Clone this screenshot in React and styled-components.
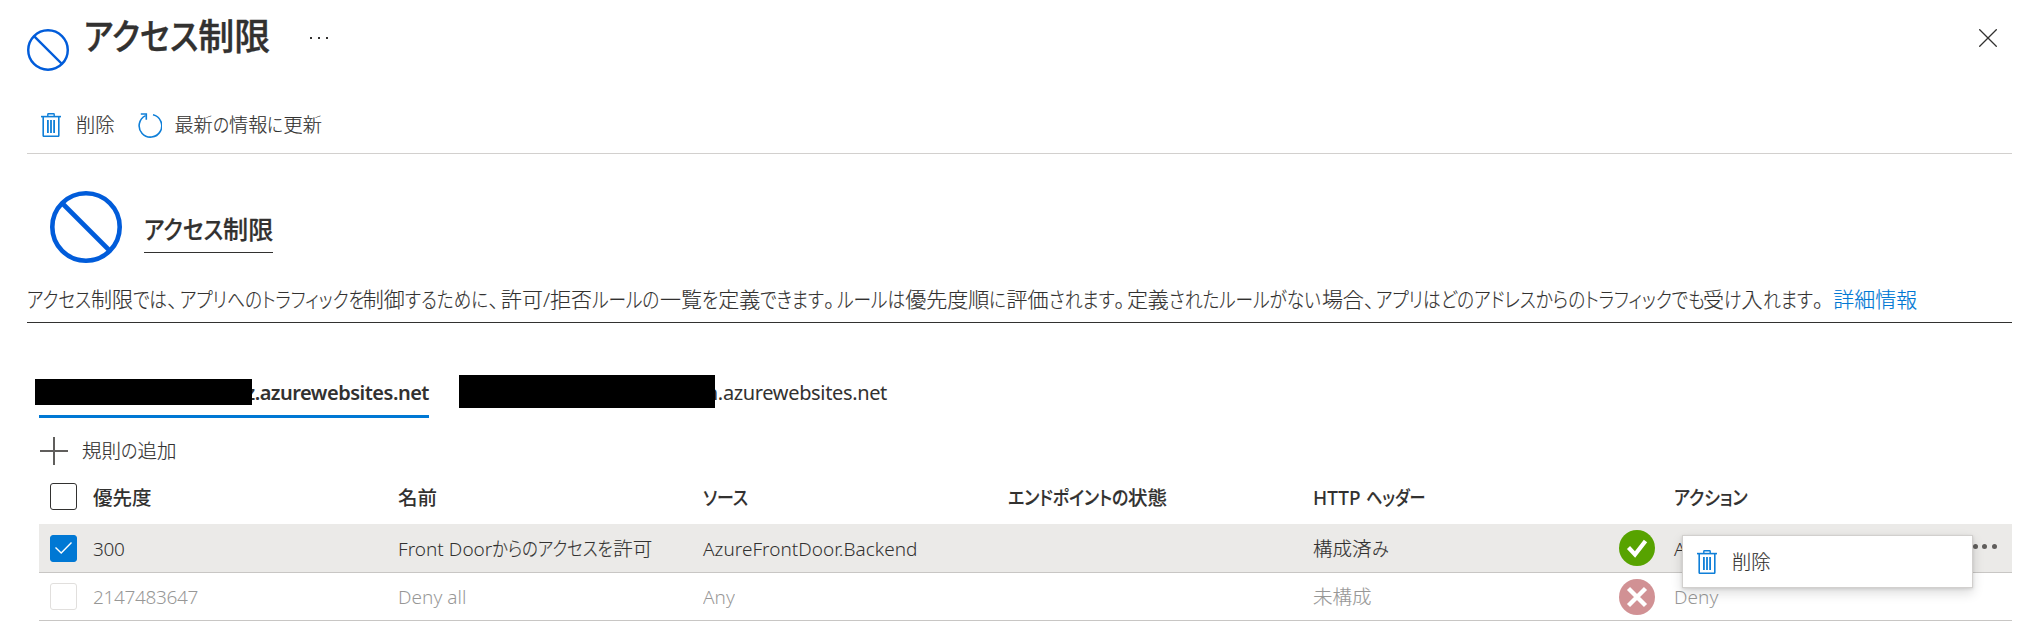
import React from "react";
import styled, { createGlobalStyle } from "styled-components";

const GlobalStyle = createGlobalStyle`
  * { box-sizing: border-box; }
  body {
    --latin-weight: 350;
    margin: 0;
    background: #fff;
    color: #323130;
    font-family: "Noto Sans", "Noto Sans CJK JP", sans-serif;
    font-size: 19.5px;
    font-weight: 300;
    overflow: hidden;
  }
`;

/* Text helper: kana are condensed relative to kanji, Latin slightly smaller. */
const Phrase = styled.span`
  white-space: nowrap;
  font-feature-settings: "palt";
  -webkit-text-stroke: ${(p) => p.$stroke}px currentColor;
`;
const Kana = styled.span`
  display: inline-block;
  transform: scaleX(${(p) => 1 - p.$tight * 1.09});
  transform-origin: left center;
  margin-right: ${(p) => -p.$tight * p.$count}em;
`;
const Punctuation = styled.span`
  letter-spacing: 0.1em;
`;
const Latin = styled.span`
  font-size: 0.974em;
  font-weight: var(--latin-weight);
  letter-spacing: ${(p) => (p.$digits ? -0.018 : 0.002)}em;
  -webkit-text-stroke: 0;
`;

const RUNS = /[\u3001\u3002]+|[\u3041-\u30ff]+|[\x20-\x7e]+|[^\x20-\x7e\u3001-\u30ff]+/g;

function Text({ children, tight = 0.12, stroke = 0.15 }) {
  return (
    <Phrase $stroke={stroke}>
      {children.match(RUNS).map((run, i) => {
        if (/^[\u3001\u3002]/.test(run)) return <Punctuation key={i}>{run}</Punctuation>;
        if (/^[\u3041-\u30ff]/.test(run)) return <Kana key={i} $tight={tight} $count={run.length}>{run}</Kana>;
        if (/^[\x20-\x7e]/.test(run)) return <Latin key={i} $digits={/^\d/.test(run)}>{run}</Latin>;
        return run;
      })}
    </Phrase>
  );
}

const Page = styled.main`
  width: 2027px;
  height: 638px;
  padding: 0 15px 0 27px;
`;

const Header = styled.header`
  display: flex;
  align-items: flex-start;
  height: 91px;
  padding-right: 15px;
`;
const HeaderIcon = styled.div`
  height: 42px;
  margin-top: 29px;
`;
const Title = styled.h1`
  margin: 12px 0 0 15px;
  width: 189px;
  font-size: 36px;
  font-weight: 500;
  line-height: 50px;
`;
const MoreDots = styled.div`
  display: flex;
  gap: 6px;
  margin: 37px 0 0 37px;
  i { width: 2px; height: 2px; background: #323130; }
`;
const CloseButton = styled.button`
  margin: 29px 0 0 auto;
  padding: 0;
  border: 0;
  background: none;
  height: 18px;
`;

const Toolbar = styled.div`
  display: flex;
  align-items: center;
  height: 63px;
  padding: 11px 0 5px 14px;
  border-bottom: 1px solid #d2d0ce;
  font-size: 19.2px;
`;
const Command = styled.div`
  display: flex;
  align-items: center;
  gap: ${(p) => p.$gap || 15}px;
  margin-right: 24px;
  line-height: 28px;
  svg { display: block; }
`;

const Hero = styled.section`
  display: flex;
  height: 124px;
  padding: 37px 0 0 23px;
`;
const HeroTitle = styled.h2`
  margin: 19px 0 0 22px;
  width: 129px;
  height: 43px;
  border-bottom: 1px solid #323130;
  font-size: 25.1px;
  font-weight: 500;
  line-height: 39px;
`;

const Description = styled.p`
  display: flex;
  gap: 8px;
  margin: 0;
  height: 45px;
  border-bottom: 1px solid #323130;
  font-size: 21px;
  line-height: 43px;
`;
const Link = styled.a`
  color: #0078d4;
`;

const Tabs = styled.nav`
  display: flex;
  gap: 30px;
  height: 95px;
  padding: 53px 0 0 12px;
`;
const Tab = styled.div`
  position: relative;
  width: ${(p) => p.$width}px;
  height: 42px;
  border-bottom: 3px solid ${(p) => (p.$active ? "#0078d4" : "transparent")};
  font-size: 20px;
  font-weight: ${(p) => (p.$active ? 600 : 400)};
  letter-spacing: ${(p) => (p.$active ? -0.5 : -0.35)}px;
  line-height: 34px;
  text-align: right;
`;
const Redaction = styled.span`
  position: absolute;
  left: ${(p) => p.$left}px;
  top: ${(p) => p.$top}px;
  width: ${(p) => p.$width}px;
  height: ${(p) => p.$height}px;
  background: #000;
`;

const AddRule = styled.div`
  display: flex;
  align-items: center;
  gap: 14px;
  height: 48px;
  padding: 0 0 0 13px;
  margin-top: 9px;
  line-height: 28px;
  svg { display: block; }
`;

const Table = styled.div`
  margin-left: 12px;
`;
const Row = styled.div`
  position: relative;
  display: grid;
  grid-template-columns: 54px 305px 305px 305px 305px 306px 55px 1fr 60px;
  align-items: center;
  line-height: 28px;
`;
const HeadRow = styled(Row)`
  --latin-weight: 550;
  height: 49px;
  font-weight: 500;
  padding-bottom: 6px;
`;
const BodyRow = styled(Row)`
  height: ${(p) => p.$height}px;
  border-bottom: 1px solid #c8c6c4;
  background: ${(p) => (p.$selected ? "#ebeae8" : "transparent")};
`;
const Cell = styled.div`
  opacity: ${(p) => (p.$muted ? 0.5 : 1)};
  padding-top: ${(p) => (p.$head ? 3 : 1)}px;
`;
const CheckBox = styled.div`
  display: flex;
  align-items: center;
  justify-content: center;
  width: 27px;
  height: 27px;
  margin-left: 11px;
  border: 1px solid ${(p) => (p.$checked ? "#0078d4" : p.$muted ? "#e1dfdd" : "#323130")};
  border-radius: 3px;
  background: ${(p) => (p.$checked ? "#0078d4" : "#fff")};
`;
const StatusIcon = styled.div`
  height: 36px;
  opacity: ${(p) => (p.$muted ? 0.5 : 1)};
  svg { display: block; }
`;
const RowMenuButton = styled.div`
  display: flex;
  justify-content: flex-end;
  gap: 4.6px;
  padding: 0 15px 4px 0;
  i { width: 5px; height: 5px; border-radius: 50%; background: #605e5c; }
`;
const ContextMenu = styled.div`
  position: absolute;
  z-index: 2;
  left: 1643px;
  top: 11px;
  display: flex;
  align-items: center;
  gap: 15px;
  width: 291px;
  height: 53px;
  padding-left: 14px;
  border: 1px solid #d2d0ce;
  background: #fff;
  font-size: 19.2px;
  box-shadow: 0 5px 11px rgba(0, 0, 0, 0.14), 0 1px 3px rgba(0, 0, 0, 0.12);
  svg { display: block; }
`;

const BlockedIcon = ({ size, stroke }) => (
  <svg width={size} height={size} viewBox="0 0 72 72" fill="none" stroke="#015cda">
    <circle cx="36" cy="36" r={36 - stroke / 2} strokeWidth={stroke} />
    <path d="M12.5 12.5 60 60" strokeWidth={stroke} />
  </svg>
);
const TrashIcon = () => (
  <svg width="20" height="24" viewBox="0 0 20 24" fill="none" stroke="#0f7fd8">
    <path d="M0 3.6h20" strokeWidth="1.6" />
    <path d="M6.8 3V1.2q0-.5.6-.5h5.2q.6 0 .6.5V3" strokeWidth="1.4" />
    <path d="M2.2 3.5v19q0 .8.8.8h14q.8 0 .8-.8v-19" strokeWidth="1.6" />
    <path d="M6.9 7v13M10 7v13M13.1 7v13" strokeWidth="1.8" />
  </svg>
);
const RefreshIcon = () => (
  <svg width="24" height="25" viewBox="0 0 24 25" fill="none" stroke="#0f7fd8" strokeWidth="1.6">
    <path d="M15 1.8A11.3 11.3 0 1 1 7.6 2.6" />
    <path d="M2.8 1h5.5v5.8" />
  </svg>
);
const CheckCircle = () => (
  <svg width="36" height="36" viewBox="0 0 36 36">
    <circle cx="18" cy="18" r="18" fill="#57a300" />
    <path d="M9.5 17.5l6.5 7L26.5 11" fill="none" stroke="#fff" strokeWidth="4.2" />
  </svg>
);
const CrossCircle = () => (
  <svg width="36" height="36" viewBox="0 0 36 36">
    <circle cx="18" cy="18" r="18" fill="#a4262c" />
    <path d="M9.5 9.5l17 17M26.5 9.5l-17 17" fill="none" stroke="#fff" strokeWidth="4.4" />
  </svg>
);

export default function App() {
  return (
    <>
      <GlobalStyle />
      <Page>
        <Header>
          <HeaderIcon><BlockedIcon size={42} stroke={4.2} /></HeaderIcon>
          <Title><Text stroke={0.4} tight={0.115}>アクセス制限</Text></Title>
          <MoreDots><i /><i /><i /></MoreDots>
          <CloseButton aria-label="閉じる">
            <svg width="18" height="18" viewBox="0 0 18 18" stroke="#323130" strokeWidth="1.3">
              <path d="M.3.3l17.4 17.4M17.7.3L.3 17.7" />
            </svg>
          </CloseButton>
        </Header>

        <Toolbar>
          <Command><TrashIcon /><Text>削除</Text></Command>
          <Command $gap={12}><RefreshIcon /><Text>最新の情報に更新</Text></Command>
        </Toolbar>

        <Hero>
          <BlockedIcon size={72} stroke={4.6} />
          <HeroTitle><Text stroke={0.2}>アクセス制限</Text></HeroTitle>
        </Hero>

        <Description>
          <Text tight={0.147}>アクセス制限では、アプリへのトラフィックを制御するために、許可/拒否ルールの一覧を定義できます。ルールは優先度順に評価されます。定義されたルールがない場合、アプリはどのアドレスからのトラフィックでも受け入れます。</Text>
          <Link><Text>詳細情報</Text></Link>
        </Description>

        <Tabs>
          <Tab $active $width={390}>
            z.azurewebsites.net
            <Redaction $left={-4} $top={3} $width={217} $height={26} />
          </Tab>
          <Tab $width={428}>
            n.azurewebsites.net
            <Redaction $left={0} $top={-1} $width={256} $height={33} />
          </Tab>
        </Tabs>

        <AddRule>
          <svg width="28" height="28" viewBox="0 0 28 28" stroke="#605e5c" strokeWidth="2">
            <path d="M14 0v28M0 14h28" />
          </svg>
          <Text>規則の追加</Text>
        </AddRule>

        <Table>
          <HeadRow>
            <CheckBox />
            <Cell $head><Text stroke={0}>優先度</Text></Cell>
            <Cell $head><Text stroke={0}>名前</Text></Cell>
            <Cell $head><Text>ソース</Text></Cell>
            <Cell $head><Text>エンドポイントの状態</Text></Cell>
            <Cell $head><Text tight={0.16}>HTTP ヘッダー</Text></Cell>
            <span />
            <Cell $head><Text>アクション</Text></Cell>
          </HeadRow>
          <BodyRow $selected $height={49}>
            <CheckBox $checked>
              <svg width="17" height="12" viewBox="0 0 17 12" fill="none" stroke="#fff" strokeWidth="1.4">
                <path d="M.5 5.5l5.7 5.5L16.5.6" />
              </svg>
            </CheckBox>
            <Cell><Text>300</Text></Cell>
            <Cell><Text tight={0.145}>Front Doorからのアクセスを許可</Text></Cell>
            <Cell><Text>AzureFrontDoor.Backend</Text></Cell>
            <span />
            <Cell><Text>構成済み</Text></Cell>
            <StatusIcon><CheckCircle /></StatusIcon>
            <Cell><Text>Allow</Text></Cell>
            <RowMenuButton><i /><i /><i /></RowMenuButton>
            <ContextMenu><TrashIcon /><Text>削除</Text></ContextMenu>
          </BodyRow>
          <BodyRow $height={48}>
            <CheckBox $muted />
            <Cell $muted><Text>2147483647</Text></Cell>
            <Cell $muted><Text>Deny all</Text></Cell>
            <Cell $muted><Text>Any</Text></Cell>
            <span />
            <Cell $muted><Text>未構成</Text></Cell>
            <StatusIcon $muted><CrossCircle /></StatusIcon>
            <Cell $muted><Text>Deny</Text></Cell>
          </BodyRow>
        </Table>
      </Page>
    </>
  );
}
